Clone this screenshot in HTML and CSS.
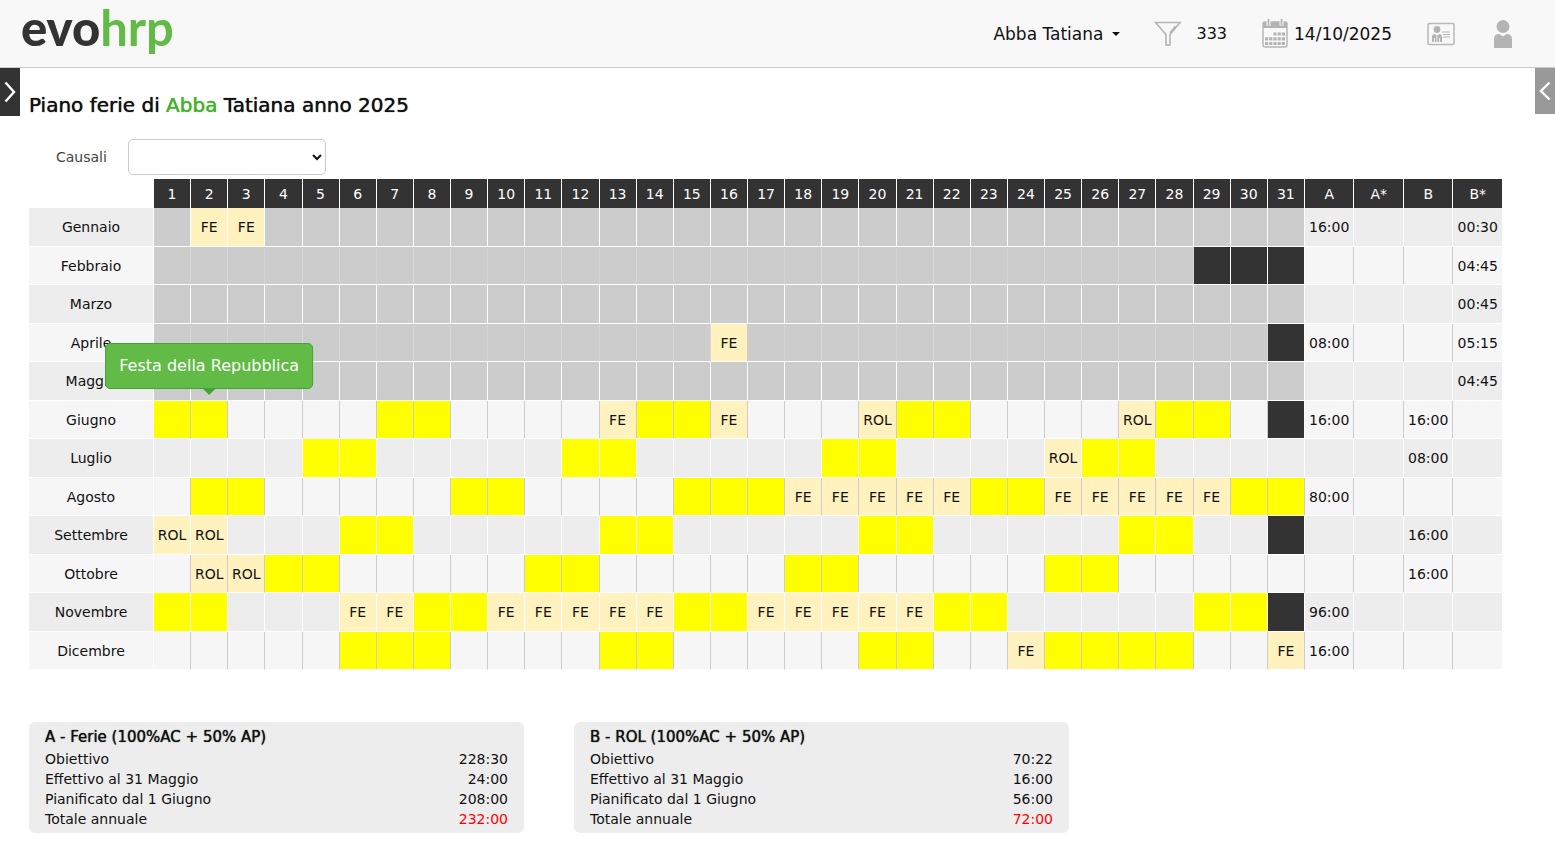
FILE: index.html
```html
<!DOCTYPE html>
<html lang="it">
<head>
<meta charset="utf-8">
<meta name="viewport" content="width=device-width, initial-scale=1">
<title>evohrp - Piano ferie</title>
<link rel="stylesheet" href="styles.css">
</head>
<body>
<header class="topbar">
  <a class="logo" href="#"><span class="logo-evo">evo</span><span class="logo-hrp">hrp</span></a>
  <nav class="tools">
    <button class="tool user-menu" type="button">Abba Tatiana <span class="caret"></span></button>
    <button class="tool filter" type="button">
      <svg width="28" height="26" viewBox="0 0 28 26" fill="none" stroke="#b4b4b4" stroke-width="1.6">
        <path d="M1.500 1.500H26L16 13.500V24H12V13.500Z"/><path d="M21.500 5L16 12"/>
      </svg>
      <span>333</span>
    </button>
    <button class="tool date" type="button">
      <svg width="26" height="30" viewBox="0 0 26 30">
        <path d="M1 3H25V9H1Z" fill="#b4b4b4"/>
        <rect x="1" y="3" width="24" height="25" rx="2" fill="none" stroke="#b4b4b4" stroke-width="1.400"/>
        <path d="M6.500 0V6.500M19.500 0V6.500" stroke="#f8f8f8" stroke-width="4"/>
        <path d="M6.500 0V6M19.500 0V6" stroke="#b4b4b4" stroke-width="1.800"/>
        <path d="M11.400 15H23M3 19.800H23M3 24.500H23" stroke="#b4b4b4" stroke-width="3.200" stroke-dasharray="3.200 1"/>
      </svg>
      <span>14/10/2025</span>
    </button>
    <button class="tool badge" type="button" aria-label="Scheda personale">
      <svg width="28" height="24" viewBox="0 0 28 24">
        <rect x="1" y="1.500" width="26" height="21" rx="1.500" fill="none" stroke="#b8b8b8" stroke-width="1.500"/>
        <circle cx="10" cy="7.500" r="3.400" fill="#b4b4b4"/>
        <path d="M5 20V15Q5 12 8 12L10 14L12 12Q15 12 15 15V20Z" fill="#b4b4b4"/>
        <path d="M10 14V20M7.500 16V20M12.500 16V20" stroke="#f8f8f8" stroke-width="0.800"/>
        <path d="M15 10H23M16 12.500H23M16 15H23" stroke="#b8b8b8"/>
      </svg>
    </button>
    <button class="tool person" type="button" aria-label="Profilo">
      <svg width="20" height="30" viewBox="0 0 20 30" fill="#b4b4b4">
        <circle cx="10" cy="7.500" r="6.500"/>
        <path d="M1 29V20Q1 15 6.500 15L10 17.500L13.500 15Q19 15 19 20V29Z"/>
      </svg>
    </button>
  </nav>
</header>

<div class="workspace">
  <button class="side-tab side-tab-left" type="button" aria-label="Apri menu">
    <svg width="12" height="22" viewBox="0 0 12 22" fill="none" stroke="#fff" stroke-width="2.400"><path d="M1.500 1.500L10 11L1.500 20.500"/></svg>
  </button>
  <main class="content">
    <h1 class="page-title">Piano ferie di <span class="surname">Abba</span> Tatiana anno 2025</h1>
    <div class="causale">
      <label for="causali">Causali</label>
      <select id="causali" class="causale-select"><option></option></select>
    </div>
    <table class="plan">
      <colgroup>
        <col class="col-month"><col class="col-day" span="31"><col class="col-total" span="4">
      </colgroup>
      <thead><tr id="plan-head"><td></td></tr></thead>
      <tbody id="plan-body"></tbody>
    </table>
    <div class="summaries">
      <section class="summary">
        <h2>A - Ferie (100%AC + 50% AP)</h2>
        <dl>
          <div><dt>Obiettivo</dt><dd>228:30</dd></div>
          <div><dt>Effettivo al 31 Maggio</dt><dd>24:00</dd></div>
          <div><dt>Pianificato dal 1 Giugno</dt><dd>208:00</dd></div>
          <div><dt>Totale annuale</dt><dd class="over">232:00</dd></div>
        </dl>
      </section>
      <section class="summary">
        <h2>B - ROL (100%AC + 50% AP)</h2>
        <dl>
          <div><dt>Obiettivo</dt><dd>70:22</dd></div>
          <div><dt>Effettivo al 31 Maggio</dt><dd>16:00</dd></div>
          <div><dt>Pianificato dal 1 Giugno</dt><dd>56:00</dd></div>
          <div><dt>Totale annuale</dt><dd class="over">72:00</dd></div>
        </dl>
      </section>
    </div>
  </main>
  <button class="side-tab side-tab-right" type="button" aria-label="Apri pannello">
    <svg width="12" height="22" viewBox="0 0 12 22" fill="none" stroke="#fff" stroke-width="2.400"><path d="M10.500 2.500L2 11L10.500 19.500"/></svg>
  </button>
</div>
<script src="plan.js"></script>
</body>
</html>
```

FILE: plan.js
```js
// Each month: name, days in month, past flag, days off, absences, totals A / A* / B / B*
const months = [
  { name: "Gennaio", days: 31, past: true, off: [], leave: { FE: [2, 3] }, totals: ["16:00", "", "", "00:30"] },
  { name: "Febbraio", days: 28, past: true, off: [], leave: {}, totals: ["", "", "", "04:45"] },
  { name: "Marzo", days: 31, past: true, off: [], leave: {}, totals: ["", "", "", "00:45"] },
  { name: "Aprile", days: 30, past: true, off: [], leave: { FE: [16] }, totals: ["08:00", "", "", "05:15"] },
  { name: "Maggio", days: 31, past: true, off: [], leave: {}, totals: ["", "", "", "04:45"] },
  { name: "Giugno", days: 30, off: [1, 2, 7, 8, 14, 15, 21, 22, 28, 29], leave: { FE: [13, 16], ROL: [20, 27] }, totals: ["16:00", "", "16:00", ""], note: { day: 2, text: "Festa della Repubblica" } },
  { name: "Luglio", days: 31, off: [5, 6, 12, 13, 19, 20, 26, 27], leave: { ROL: [25] }, totals: ["", "", "08:00", ""] },
  { name: "Agosto", days: 31, off: [2, 3, 9, 10, 15, 16, 17, 23, 24, 30, 31], leave: { FE: [18, 19, 20, 21, 22, 25, 26, 27, 28, 29] }, totals: ["80:00", "", "", ""] },
  { name: "Settembre", days: 30, off: [6, 7, 13, 14, 20, 21, 27, 28], leave: { ROL: [1, 2] }, totals: ["", "", "16:00", ""] },
  { name: "Ottobre", days: 31, off: [4, 5, 11, 12, 18, 19, 25, 26], leave: { ROL: [2, 3] }, totals: ["", "", "16:00", ""] },
  { name: "Novembre", days: 30, off: [1, 2, 8, 9, 15, 16, 22, 23, 29, 30], leave: { FE: [6, 7, 10, 11, 12, 13, 14, 17, 18, 19, 20, 21] }, totals: ["96:00", "", "", ""] },
  { name: "Dicembre", days: 31, off: [6, 7, 8, 13, 14, 20, 21, 25, 26, 27, 28], leave: { FE: [24, 31] }, totals: ["16:00", "", "", ""] }
];

function cell(tag, className, text) {
  const el = document.createElement(tag);
  if (className) el.className = className;
  el.textContent = text;
  return el;
}

const head = document.getElementById("plan-head");
for (let day = 1; day <= 31; day++) head.append(cell("th", "", day));
["A", "A*", "B", "B*"].forEach(label => head.append(cell("th", "", label)));

const body = document.getElementById("plan-body");
for (const month of months) {
  const row = document.createElement("tr");
  row.append(cell("th", "month", month.name));
  for (let day = 1; day <= 31; day++) {
    const code = Object.keys(month.leave).find(key => month.leave[key].includes(day)) || "";
    let kind = "day";
    if (day > month.days) kind += " missing";
    else if (code) kind += " leave";
    else if (month.past) kind += " past";
    else if (month.off.includes(day)) kind += " off";
    const td = cell("td", kind, code);
    if (month.note && month.note.day === day) {
      td.classList.add("noted");
      td.append(cell("span", "tooltip", month.note.text));
    }
    row.append(td);
  }
  month.totals.forEach(total => row.append(cell("td", "total", total)));
  body.append(row);
}
```

FILE: styles.css
```css
* { box-sizing: border-box; }

body {
  margin: 0;
  background: #fff;
  color: #111;
  font: 14px/20px "DejaVu Sans", Verdana, sans-serif;
}

button {
  border: 0;
  padding: 0;
  background: none;
  color: inherit;
  font: inherit;
}

svg { display: block; flex: none; }

.topbar {
  display: flex;
  align-items: center;
  justify-content: space-between;
  height: 68px;
  padding: 0 42px 0 21px;
  background: #f8f8f8;
  border-bottom: 1px solid #ccc;
}

.logo {
  align-self: flex-start;
  font: 49px/54px Lato, sans-serif;
  text-decoration: none;
}
.logo-evo { color: #333; font-weight: 900; }
.logo-hrp { color: #62bb46; font-weight: 700; }

.tools { display: flex; align-items: center; font-size: 16px; }
.tool { display: flex; align-items: center; }
.user-menu { gap: 9px; margin-right: 34px; font-size: 17px; }
.caret {
  border: 4px solid transparent;
  border-top: 4px solid #111;
  border-bottom: 0;
}
.filter { gap: 14px; margin-right: 35px; }
.date { gap: 6px; margin-right: 35px; font-size: 17px; }
.badge { margin-right: 38px; }

.workspace { display: flex; align-items: flex-start; }

.side-tab {
  display: flex;
  flex: none;
  align-items: center;
  justify-content: center;
  width: 20px;
}
.side-tab-left { height: 48px; background: #333; }
.side-tab-right { height: 46px; background: #999; }

.content { flex: 1; min-width: 0; padding: 24px 32px 32px 9px; }

.page-title {
  margin: 0 0 20px;
  font-size: 20px;
  font-weight: 400;
  line-height: 27px;
  text-shadow: 0 0 1px currentColor;
}
.surname { color: #43b02a; }

.causale {
  display: flex;
  align-items: center;
  gap: 21px;
  margin-bottom: 4px;
  padding-left: 27px;
  color: #444;
}
.causale-select {
  width: 198px;
  height: 36px;
  padding: 0 4px;
  border: 1px solid #ccc;
  border-radius: 5px;
  background: #fff;
  color: #111;
  font: inherit;
  font-size: 16px;
}

.plan {
  width: 100%;
  table-layout: fixed;
  border-collapse: separate;
  border-spacing: 0;
}
.col-month { width: 125px; }
.col-total { width: 3.36%; }

.plan th,
.plan td {
  padding: 0;
  font-weight: 400;
  text-align: center;
  white-space: nowrap;
}
.plan thead th {
  height: 29px;
  background: #333;
  color: #fff;
  border-right: 1px solid #fff;
}
.plan tbody tr { height: 39px; background: #ededed; }
.plan tbody tr:nth-child(even) { height: 38px; background: #f6f6f6; }
.plan tbody th,
.plan tbody td { border-right: 1px solid #fff; border-bottom: 1px solid #fff; }
.plan tbody tr:nth-child(even) td { border-right-color: #ccc; }
.plan tbody tr .past { background: #ccc; }
.plan tbody tr:nth-child(even) .past { border-right-color: #d6d6d6; }
.plan tbody tr .off { background: #ff0; }
.plan tbody tr .leave { background: #fff2bf; }
.plan tbody tr .missing { background: #333; }
.plan tbody tr:nth-child(even) .missing,
.plan tbody tr:nth-child(even) td:last-child { border-right-color: #fff; }

.noted { position: relative; }
.tooltip {
  position: absolute;
  bottom: calc(100% + 12px);
  left: 50%;
  transform: translateX(-50%);
  padding: 11px 13px;
  border: 1px solid #3fa535;
  border-radius: 5px;
  background: #62bb46;
  color: #fff;
  font-size: 16px;
  line-height: 22px;
}
.tooltip::after {
  content: "";
  position: absolute;
  top: calc(100% + 1px);
  left: 50%;
  margin-left: -6px;
  border: 6px solid transparent;
  border-top-color: #3fa535;
  border-bottom: 0;
}

.summaries { display: flex; gap: 50px; margin-top: 52px; }
.summary {
  flex: 0 1 495px;
  padding: 5px 16px 4px;
  border-radius: 6px;
  background: #ededed;
}
.summary h2 {
  margin: 0 0 2px;
  font-size: 15px;
  font-weight: 400;
  line-height: 20px;
  text-shadow: 0 0 1px currentColor;
}
.summary dl { margin: 0; }
.summary dl div { display: flex; justify-content: space-between; }
.summary dd { margin: 0; }
.over { color: #f00; }
```
